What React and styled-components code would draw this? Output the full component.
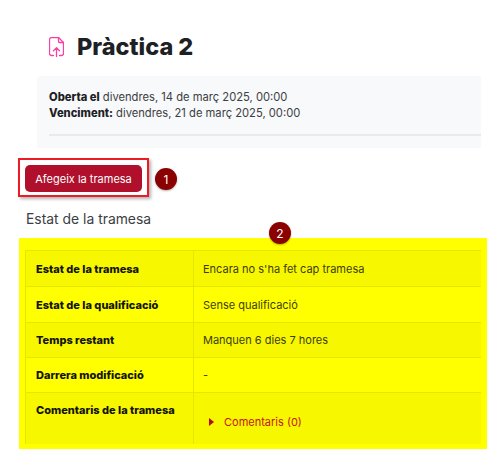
import React from 'react';
import styled, { createGlobalStyle } from 'styled-components';

const GlobalStyle = createGlobalStyle`
    html, body {
        margin: 0;
        padding: 0;
        background: #fff;
    }
    body {
        font-family: "Inter", "Liberation Sans", sans-serif;
        color: #1d2125;
    }
`;

const Page = styled.div`
    position: relative;
    width: 500px;
    height: 457px;
    overflow: hidden;
    padding-top: 36px;
    box-sizing: border-box;
`;

const Heading = styled.div`
    display: flex;
    align-items: center;
    gap: 13px;
    height: 22px;
    margin-left: 49px;
`;

const Title = styled.h1`
    margin: 0;
    font-size: 23.5px;
    line-height: 22px;
    font-weight: 800;
    color: #1d2125;
`;

const Dates = styled.div`
    width: 444px;
    height: 72px;
    margin: 18px 0 0 37px;
    padding: 13px 0 0 12px;
    box-sizing: border-box;
    background: #f8f9fa;
    border-radius: 4px 0 0 0;
    font-size: 11.2px;
    line-height: 16px;
    color: #3c4043;
`;

const DateRow = styled.div`
    white-space: nowrap;
    strong {
        font-weight: 800;
        color: #1d2125;
    }
`;

const Rule = styled.div`
    height: 2px;
    margin-top: 13px;
    background: #e9e9f0;
`;

const Highlight = styled.div`
    width: 131px;
    height: 39px;
    margin: 10px 0 0 18px;
    padding: 5px;
    box-sizing: border-box;
    border: 2px solid #ed1c24;
    box-shadow: 2px 2px 3px rgba(0, 0, 0, 0.3);
`;

const SubmitButton = styled.button`
    display: block;
    width: 117px;
    height: 27px;
    padding: 0;
    border: 0;
    border-radius: 5px;
    background: #b0102c;
    color: #fff;
    font-family: inherit;
    font-size: 11px;
`;

const SectionTitle = styled.h3`
    margin: 13px 0 0 26px;
    font-size: 13.9px;
    line-height: 18px;
    font-weight: 400;
    color: #3c4043;
`;

const Marked = styled.div`
    width: 468px;
    height: 211px;
    margin: 10px 0 0 19px;
    padding: 12px 0 0 6px;
    box-sizing: border-box;
    background: #ffff00;
`;

const StatusTable = styled.table`
    width: 456px;
    border-collapse: collapse;
    table-layout: fixed;
    font-size: 11px;
`;

const Row = styled.tr`
    height: ${props => props.$height}px;
    background: ${props => (props.$odd ? '#f7f700' : 'transparent')};
    border-top: 1px solid #e6e600;
`;

const Head = styled.th`
    width: 168px;
    box-sizing: border-box;
    padding: ${props => (props.$top ? '10px 0 0 10px' : '0 0 0 10px')};
    border-left: 1px solid #e6e600;
    border-right: 1px solid #e6e600;
    text-align: left;
    vertical-align: ${props => (props.$top ? 'top' : 'middle')};
    font-size: 11px;
    font-weight: 800;
    color: #14140a;
`;

const Cell = styled.td`
    padding: 0 0 0 9px;
    color: #3d3d0c;
    vertical-align: middle;
`;

const Comments = styled.a`
    display: flex;
    align-items: center;
    gap: 10px;
    margin: 7px 0 0 6px;
    color: #c51616;
`;

const Caret = styled.span`
    width: 0;
    height: 0;
    border-top: 4px solid transparent;
    border-bottom: 4px solid transparent;
    border-left: 5px solid #b50c0c;
`;

const Marker = styled.span`
    position: absolute;
    left: ${props => props.$x}px;
    top: ${props => props.$y}px;
    width: 22px;
    height: 22px;
    border-radius: 50%;
    display: flex;
    align-items: center;
    justify-content: center;
    background: #8b0000;
    color: #fff;
    font-size: 12px;
    box-shadow: 0 1px 2px rgba(0, 0, 0, 0.3);
`;

const UploadIcon = () => (
    <svg width="15" height="20" viewBox="0 0 15 20" fill="none" stroke="#fb3fa6" strokeWidth="1.3" strokeLinejoin="round" strokeLinecap="round">
        <path d="M4.5 18.5H2.5a2 2 0 0 1-2-2V2.5a2 2 0 0 1 2-2h7l5 5v11a2 2 0 0 1-2 2h-2" />
        <path d="M9.5.5v4a1 1 0 0 0 1 1h4" />
        <path d="M7.5 19.5V10.8M4.5 13.8 7.5 10.8 10.5 13.8" />
    </svg>
);

const rows = [
    { label: 'Estat de la tramesa', value: 'Encara no s\'ha fet cap tramesa', height: 36 },
    { label: 'Estat de la qualificació', value: 'Sense qualificació', height: 36 },
    { label: 'Temps restant', value: 'Manquen 6 dies 7 hores', height: 35 },
    { label: 'Darrera modificació', value: '-', height: 35 },
];

const App = () => {
    return (
        <Page>
            <GlobalStyle />
            <Heading>
                <UploadIcon />
                <Title>Pràctica 2</Title>
            </Heading>
            <Dates>
                <DateRow><strong>Oberta el</strong> divendres, 14 de març 2025, 00:00</DateRow>
                <DateRow><strong>Venciment:</strong> divendres, 21 de març 2025, 00:00</DateRow>
                <Rule />
            </Dates>
            <Highlight>
                <SubmitButton>Afegeix la tramesa</SubmitButton>
            </Highlight>
            <SectionTitle>Estat de la tramesa</SectionTitle>
            <Marked>
                <StatusTable>
                    <tbody>
                        {rows.map((row, index) => (
                            <Row key={index} $odd={index % 2 === 0} $height={row.height}>
                                <Head>{row.label}</Head>
                                <Cell>{row.value}</Cell>
                            </Row>
                        ))}
                        <Row $odd $height={51}>
                            <Head $top>Comentaris de la tramesa</Head>
                            <Cell>
                                <Comments><Caret />Comentaris (0)</Comments>
                            </Cell>
                        </Row>
                    </tbody>
                </StatusTable>
            </Marked>
            <Marker $x={155} $y={168}>1</Marker>
            <Marker $x={269} $y={222}>2</Marker>
        </Page>
    );
}

export default App;
